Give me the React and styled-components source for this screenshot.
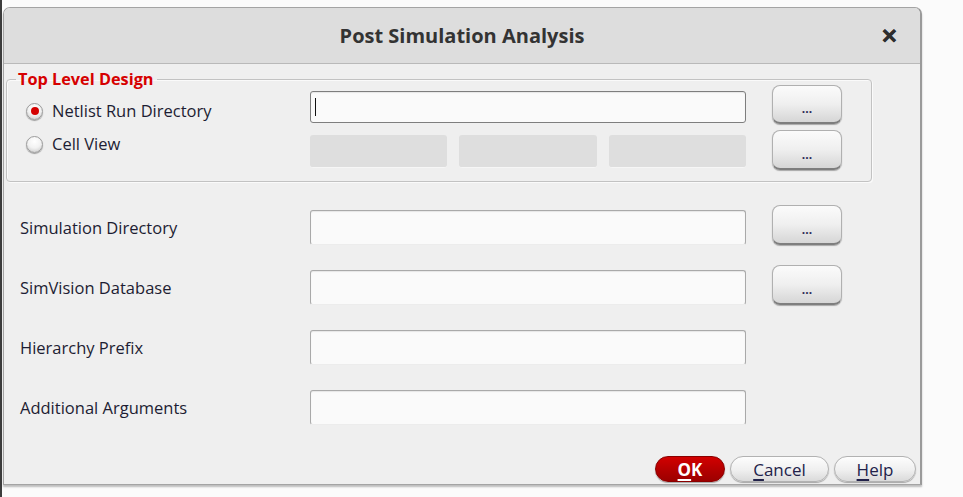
import React from 'react'
import styled, {createGlobalStyle} from 'styled-components'

const GlobalStyle = createGlobalStyle`
  html, body {
    margin: 0;
    padding: 0;
    background: #fbfbfb;
  }
  * {
    box-sizing: border-box;
  }
`

const Page = styled.div`
  width: 963px;
  height: 497px;
  padding: 7px 0 0 1px;
  border-left: 2px solid #3c3c3c;
  font-family: "Open Sans", "Liberation Sans", sans-serif;
  color: #1d1d33;
`

const Window = styled.div`
  width: 919px;
  height: 478px;
  display: flex;
  flex-direction: column;
  background: #efefef;
  border: 1px solid #a4a4a4;
  border-right: 2px solid #9a9a9a;
  border-radius: 7px 7px 0 0;
  box-shadow: 0 2px 2px rgba(0, 0, 0, 0.25);
  overflow: hidden;
`

const TitleBar = styled.header`
  height: 56px;
  flex: none;
  display: grid;
  grid-template-columns: 1fr auto 1fr;
  align-items: center;
  background: #dddddd;
  border-bottom: 1px solid #b9b9b9;
`

const Title = styled.h1`
  grid-column: 2;
  margin: 0;
  font-size: 20px;
  font-weight: 700;
  color: #333;
`

const CloseButton = styled.span`
  grid-column: 3;
  justify-self: end;
  margin-right: 22px;
  font-size: 20px;
  font-weight: 900;
  color: #2e2e2e;
  line-height: 1;
  -webkit-text-stroke: 0.6px #2e2e2e;
`

const Body = styled.div`
  flex: 1;
  display: flex;
  flex-direction: column;
  padding: 9px 0 0 2px;
`

const GroupBox = styled.fieldset`
  width: 866px;
  margin: 0;
  padding: 0 0 11px 0;
  border: 1px solid #c2c2c2;
  border-radius: 4px;
  box-shadow: inset 1px 1px 0 #fafafa, 1px 1px 0 #fafafa;
`

const Legend = styled.legend`
  margin-left: 9px;
  padding: 0 3px 0 2px;
  font-size: 16.3px;
  line-height: 12px;
  font-weight: 700;
  color: #d60000;
`

const GroupGrid = styled.div`
  display: grid;
  grid-template-columns: 277px 436px 70px;
  grid-template-rows: 39px 40px;
  column-gap: 26px;
  row-gap: 6px;
  align-items: start;
`

const RadioLabel = styled.label`
  display: flex;
  align-items: center;
  gap: 9px;
  margin-top: ${props => props.$top}px;
  padding-left: 19px;
  font-size: 16.5px;
  line-height: 20px;
`

const Radio = styled.span`
  width: 17px;
  height: 17px;
  flex: none;
  border-radius: 50%;
  border: 1px solid #9c9c9c;
  background: radial-gradient(circle at 50% 30%, #ffffff 0%, #f2f2f2 50%, #c4c4c4 100%);
  box-shadow: 0 1px 1px rgba(0, 0, 0, 0.35);
  display: grid;
  place-items: center;
  &::after {
    content: '';
    width: 8px;
    height: 8px;
    border-radius: 50%;
    background: ${props => props.$checked ? '#d40000' : 'transparent'};
  }
`

const Field = styled.div`
  height: ${props => props.$height}px;
  margin-top: ${props => props.$top}px;
  display: flex;
  align-items: center;
  padding-left: 4px;
  background: #fafafa;
  border: 1px solid ${props => props.$active ? '#7e7e7e' : '#a9a9a9'};
  border-bottom-color: ${props => props.$active ? '#7e7e7e' : '#ececec'};
  border-radius: 3px;
  box-shadow: inset 0 1px 1px rgba(0, 0, 0, 0.08);
`

const Caret = styled.span`
  width: 1px;
  height: 18px;
  background: #111;
`

const DisabledRow = styled.div`
  display: grid;
  grid-template-columns: 137px 138px 137px;
  column-gap: 12px;
  margin-top: 5px;
`

const DisabledField = styled.div`
  height: 33px;
  background: #dedede;
  border-radius: 3px;
  border-bottom: 1px solid #f6f6f6;
`

const BrowseButton = styled.button`
  width: 70px;
  height: ${props => props.$height || 40}px;
  padding: 10px 0 0;
  font-family: inherit;
  font-size: 12px;
  font-weight: 700;
  line-height: 1;
  color: #2a2a55;
  background: linear-gradient(#fbfbfb, #efefef 50%, #d6d6d6);
  border: 1px solid #b0b0b0;
  border-bottom: 2px solid #7e7e7e;
  border-radius: 8px;
  box-shadow: 0 1px 1px rgba(0, 0, 0, 0.3);
`

const FormGrid = styled.div`
  display: grid;
  grid-template-columns: 264px 436px 70px;
  grid-auto-rows: 40px;
  column-gap: 26px;
  row-gap: 20px;
  align-items: start;
  margin-top: 23px;
  padding-left: 14px;
`

const FieldLabel = styled.label`
  grid-column: 1;
  margin-top: 13px;
  font-size: 16.5px;
  line-height: 20px;
  white-space: nowrap;
`

const Footer = styled.div`
  margin-top: auto;
  display: flex;
  justify-content: flex-end;
  gap: 5px;
  padding: 0 4px 2px 0;
`

const DialogButton = styled.button`
  width: ${props => props.$width}px;
  height: 26px;
  padding: 0;
  font-family: inherit;
  font-size: 17px;
  line-height: 1;
  font-weight: ${props => props.$primary ? 700 : 400};
  color: ${props => props.$primary ? '#ffffff' : '#22224a'};
  background: ${props => props.$primary
    ? 'linear-gradient(#d20000, #b30000 55%, #9c0000)'
    : 'linear-gradient(#fdfdfd, #efefef 55%, #dadada)'};
  border: 1px solid ${props => props.$primary ? '#8a0000' : '#b2b2b2'};
  border-radius: 13px;
  box-shadow: 0 1px 1px rgba(0, 0, 0, 0.3);
  & u {
    text-decoration-thickness: 2px;
    text-underline-offset: 3px;
  }
`

const rows = [
  {label: 'Simulation Directory', browse: true},
  {label: 'SimVision Database', browse: true},
  {label: 'Hierarchy Prefix', browse: false},
  {label: 'Additional Arguments', browse: false},
]

export default function App() {
  return (
    <Page>
      <GlobalStyle />
      <Window>
        <TitleBar>
          <Title>Post Simulation Analysis</Title>
          <CloseButton>✕</CloseButton>
        </TitleBar>
        <Body>
          <GroupBox>
            <Legend>Top Level Design</Legend>
            <GroupGrid>
              <RadioLabel $top={16}>
                <Radio $checked />
                Netlist Run Directory
              </RadioLabel>
              <Field $height={32} $top={6} $active>
                <Caret />
              </Field>
              <BrowseButton $height={39}>...</BrowseButton>
              <RadioLabel $top={4}>
                <Radio />
                Cell View
              </RadioLabel>
              <DisabledRow>
                <DisabledField />
                <DisabledField />
                <DisabledField />
              </DisabledRow>
              <BrowseButton>...</BrowseButton>
            </GroupGrid>
          </GroupBox>
          <FormGrid>
            {rows.map(row => (
              <React.Fragment key={row.label}>
                <FieldLabel>{row.label}</FieldLabel>
                <Field $height={35} $top={5} />
                {row.browse && <BrowseButton>...</BrowseButton>}
              </React.Fragment>
            ))}
          </FormGrid>
          <Footer>
            <DialogButton $primary $width={70}><u>O</u>K</DialogButton>
            <DialogButton $width={99}><u>C</u>ancel</DialogButton>
            <DialogButton $width={82}><u>H</u>elp</DialogButton>
          </Footer>
        </Body>
      </Window>
    </Page>
  )
}
